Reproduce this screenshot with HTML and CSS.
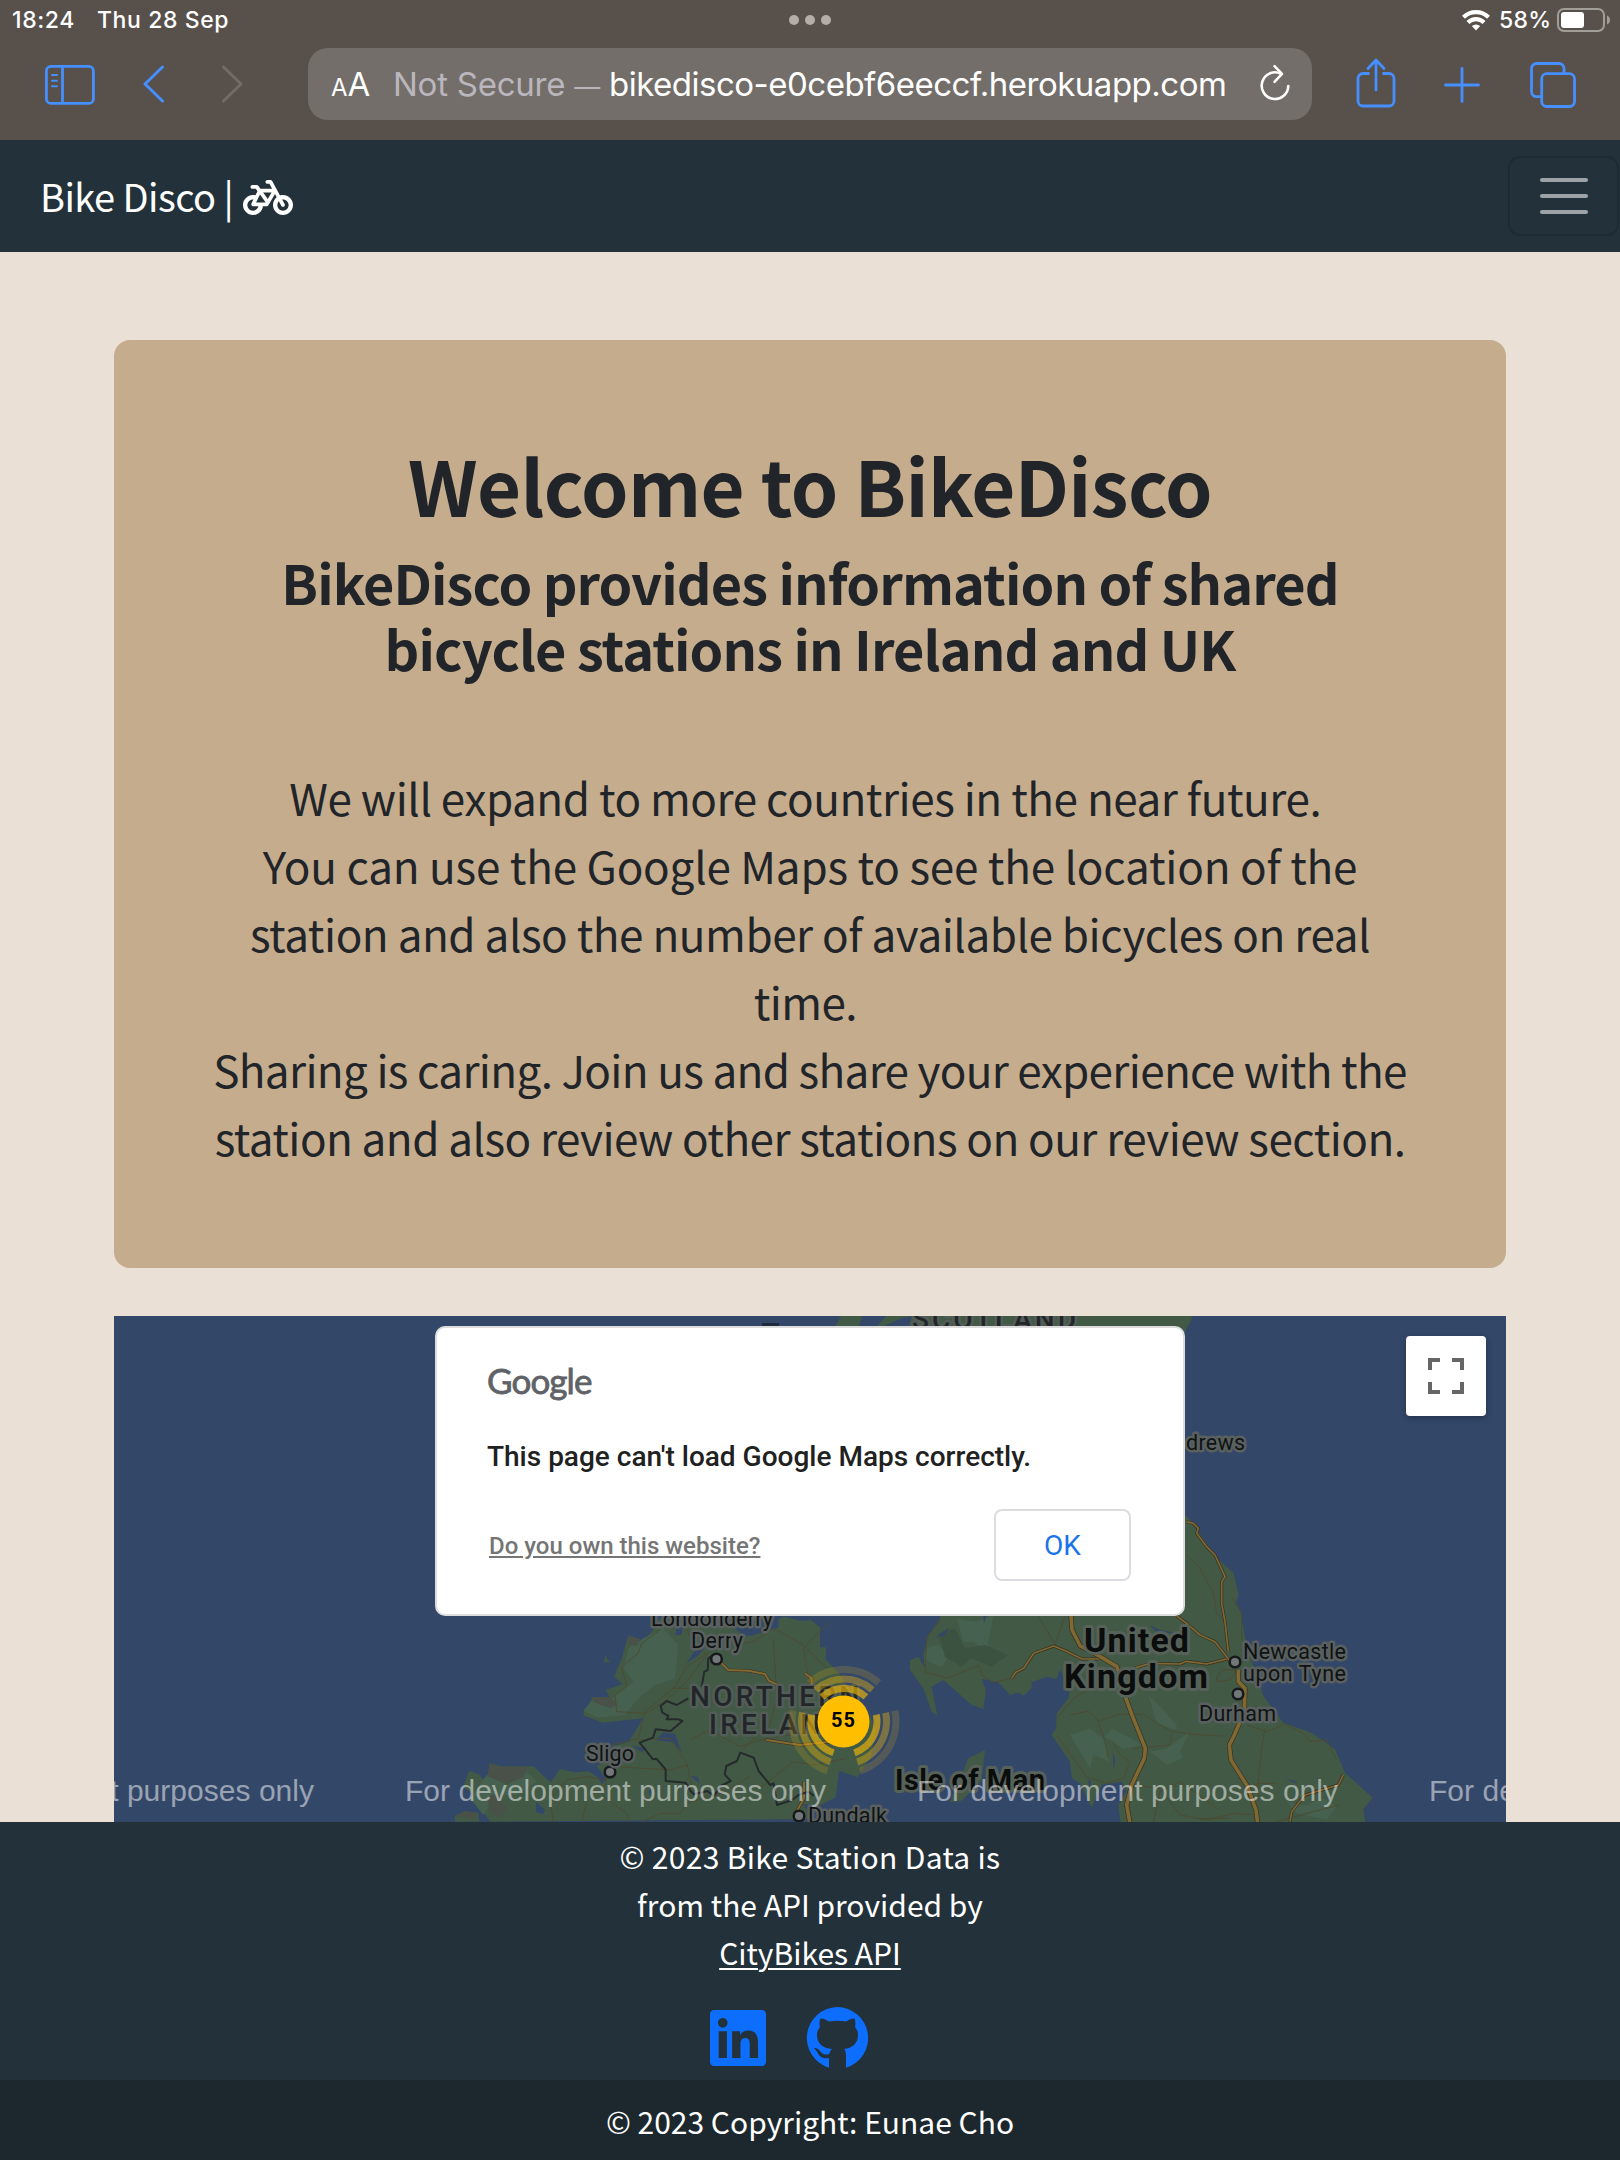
FILE: index.html
```html
<!DOCTYPE html>
<html lang="en">
<head>
<meta charset="utf-8">
<title>Bike Disco</title>
<link rel="stylesheet" href="styles.css">
</head>
<body>
<header class="browser">
  <div class="status">
    <span class="status-time">18:24</span>
    <span class="status-date">Thu 28 Sep</span>
    <span class="dots"><i></i><i></i><i></i></span>
    <svg class="wifi" viewBox="0 0 28 22" width="28" height="22"><g fill="none" stroke="#fff" stroke-width="4.200"><path d="M1.500 8.200a18 18 0 0 1 25 0"/><path d="M6 13.500a11.400 11.400 0 0 1 16 0"/></g><path fill="#fff" d="M14 21.500l-4.200-4.400a6 6 0 0 1 8.400 0z"/></svg>
    <span class="status-pct">58%</span>
    <svg class="battery" viewBox="0 0 54 24" width="54" height="24"><rect x="1" y="1" width="46" height="22" rx="6" fill="none" stroke="#a19d99" stroke-width="2"/><rect x="4" y="4" width="23" height="16" rx="3" fill="#fff"/><path fill="#a19d99" d="M50 7.500q3 1.500 3 4.500t-3 4.500z"/></svg>
  </div>
  <div class="toolbar">
    <svg class="icon-sidebar" viewBox="0 0 50 40" width="50" height="40" fill="none" stroke="#468fff" stroke-width="2.800"><rect x="1.400" y="1.400" width="47" height="37" rx="4.500"/><path d="M17.500 1.400v37"/><path stroke-width="2" stroke-linecap="round" d="M7 10h5M7 15.700h5M7 21.300h5"/></svg>
    <svg class="icon-back" viewBox="0 0 22 38" width="22" height="38" fill="none" stroke="#468fff" stroke-width="3" stroke-linecap="round" stroke-linejoin="round"><path d="M19.500 2L2 19l17.500 17"/></svg>
    <svg class="icon-forward" viewBox="0 0 22 38" width="22" height="38" fill="none" stroke="#716c67" stroke-width="3" stroke-linecap="round" stroke-linejoin="round"><path d="M2.500 2L20 19 2.500 36"/></svg>
    <div class="address">
      <span class="aa"><small>A</small>A</span>
      <span class="insecure">Not Secure <b>—</b></span>
      <span class="domain">bikedisco-e0cebf6eeccf.herokuapp.com</span>
      <svg class="icon-reload" viewBox="0 0 30 38" width="30" height="38" fill="none" stroke="#fff" stroke-width="2.600" stroke-linecap="round" stroke-linejoin="round"><path d="M21 9.800A13.300 13.300 0 1 0 28.300 22"/><path d="M14.500 2.200l7.500 7.600-7.500 8"/></svg>
    </div>
    <svg class="icon-share" viewBox="0 0 40 50" width="40" height="50" fill="none" stroke="#468fff" stroke-width="2.800" stroke-linecap="round" stroke-linejoin="round"><path stroke-linecap="butt" d="M13.500 15.500H7a5 5 0 0 0-5 5V43a5 5 0 0 0 5 5h26a5 5 0 0 0 5-5V20.500a5 5 0 0 0-5-5h-6.500"/><path d="M20 32V3M12 10.500L20 2l8 8.500"/></svg>
    <svg class="icon-plus" viewBox="0 0 36 36" width="36" height="36" stroke="#468fff" stroke-width="2.800" stroke-linecap="round"><path d="M18 1.500v33M1.500 18h33"/></svg>
    <svg class="icon-tabs" viewBox="0 0 46 46" width="46" height="46" fill="none" stroke="#468fff" stroke-width="2.800"><path d="M11.500 34.600H6.500A5 5 0 0 1 1.500 29.600V6.500a5 5 0 0 1 5-5h22.500a5 5 0 0 1 5 5v5"/><rect x="11.700" y="11.700" width="32.800" height="32.800" rx="5"/></svg>
  </div>
</header>

<nav class="navbar">
  <a class="brand">Bike Disco |
    <svg viewBox="0 32 640 448" width="50" height="35" fill="#fff"><path d="M312 32c-13.300 0-24 10.700-24 24s10.700 24 24 24h25.700l34.600 64H222.900l-27.400-38C191 99.700 183.700 96 176 96H120c-13.300 0-24 10.700-24 24s10.700 24 24 24h43.700l22.100 30.700-26.600 53.100c-10-2.500-20.500-3.800-31.200-3.800C57.300 224 0 281.300 0 352s57.300 128 128 128c65.300 0 119.100-48.900 127-112h49c8.500 0 16.300-4.500 20.700-11.800l84.800-143.500 21.700 40.100C402.400 276.300 384 312 384 352c0 70.700 57.300 128 128 128s128-57.300 128-128-57.300-128-128-128c-13.500 0-26.500 2.100-38.700 6L375.400 48.800C369.800 38.400 359 32 347.200 32H312zM458.600 303.700l32.300 59.700c6.300 11.700 20.900 16 32.500 9.700s16-20.900 9.700-32.500l-32.300-59.700c3.600-.6 7.400-.9 11.200-.9 39.800 0 72 32.200 72 72s-32.200 72-72 72-72-32.200-72-72c0-18.600 7-35.500 18.600-48.300zM133.200 368h65c-7.300 32.100-36 56-70.200 56-39.800 0-72-32.200-72-72s32.200-72 72-72c1.700 0 3.400.1 5.100.2l-24.200 48.500c-9 18.100 4.100 39.400 24.300 39.400zm33.700-48l50.700-101.300 72.900 101.200-.1.100H166.900zm90.600-128H365.900L317 274.800 257.400 192z"/></svg>
  </a>
  <button class="toggler"><i></i><i></i><i></i></button>
</nav>

<main>
  <section class="welcome">
    <h1>Welcome to BikeDisco</h1>
    <h2>BikeDisco provides information of shared<br>bicycle stations in Ireland and UK</h2>
    <p>
      <span class="wide">We will expand to more countries in the near future.&nbsp;</span>
      <span class="wider">You can use the Google Maps to see the location of the</span>
      <span class="wide">station and also the number of available bicycles on real</span>
      <span>time.&nbsp;</span>
      <span class="narrow">Sharing is caring. Join us and share your experience with the</span>
      <span>station and also review other stations on our review section.</span>
    </p>
  </section>

  <section class="map">
    <svg class="map-canvas" viewBox="114 1316 1392 506" width="1392" height="506">
      <rect x="114" y="1316" width="1392" height="506" fill="#334769"/>
      <path fill="#415945" d="M833 1330l8-14h352l-8 16z"/>
      <path fill="#334769" d="M862 1316h24l-12 14h-16zM902 1318l10-2-4 12h-28z"/>
      <path fill="#1f2b3a" d="M762 1323h17v5h-17z"/>
      <!-- Ireland -->
      <g transform="translate(430 1605) scale(.33333)">
        <path fill="#415945" d="M75 650V632l28-14 42 6 3 26zM180 650l-32-48 7-12-55-45 18-48 29 11 13 17 25-17-7-33 37 9h95l52 48 28-40 45 10 40-3 25 15 15 22 15-12-30-40 60-35-15-25 50-12 45-72-123 13-59-23 26-46 58 1-15-30 50-18-25-22 25-60 15-57 45 12 30-32 20-36h190l60 45 30-20 40-10 55-22 50 12 30-2 28 22v60l19 0-2 35 50 55 20 50 45 40 20 30 15 40-15 80-40 60-55-20-10 80-50 25-50-5 35 45zM520 172l6-20 14 20z"/>
        <path fill="#46614f" d="M595 130l45-30 60-30 45 50-10 100-60 20-50 40-40 50-80 8-45-20 30-38 50 5 70-55-30-40zM170 510l60 30 60-40 30 30-60 40-60 0-40 60-40-50z"/>
        <path fill="#4a5148" d="M178 478l40 8h72l-8 30-50 20-60-22zM170 575l30-8 30 42-20 30-30-20zM482 276l60 0 20 22-20 12-50-18zM80 632l25-12 35 5-10 18-30-5zM595 90l35 12-10 22-25-10z"/>
        <path fill="#334769" d="M770 175l22-35 35-15-20 25zM680 402l20-20 35 5 20 55-25-30-50-6zM606 422l40 8-10 12zM782 512l22 5 5 20zM318 590l28 26-8 12-20-8zM655 560l8-8-2 22zM735 90l10-40 15 0-5 40zM935 90l20-35 50-22h40v35l-85 25z"/>
        <g fill="none" stroke="#4d4b31" stroke-width="3">
          <path d="M690 75l-55 40-10 30-50 40 15 60-35 25 5 50 90 5 65-45 55-50 60-80-50-55-30-70M770 185l-35 60-90 75-20 80-80 20M770 185l70-45M730 250h60M620 405l100-5 50 75 15 65M780 405l60-30 90 50 60-20 120-20M530 525l-60-10-60 10-50 60 10 65M470 590l-15 60M530 520l-10 55 70 50 10 25M560 485l80 5 80 5 55-15M640 650l50-25h60l20-30 100-30 90-50M850 130l120-20 60-40 90 50 70 70M1030 100l10 180-20 80-80 70M1200 50l-80 80 20 120M990 550l100-80 60 10 100-20"/>
        </g>
        <path fill="none" stroke="#373022" stroke-width="9" d="M870 170l25 25 60 2 50 10 12 20 25 12M1125 205l20 15v20M1010 405l100 15 90-10M1122 530v50l-25 45"/>
        <path fill="none" stroke="#846a30" stroke-width="6" d="M870 170l25 25 60 2 50 10 12 20 25 12M1125 205l20 15v20M1010 405l100 15 90-10M1122 530v50l-25 45"/>
        <path fill="none" stroke="#252a2c" stroke-width="6" stroke-linejoin="round" d="M850 150l-15 10-2 35-10 5-8 45M775 280l-35 20-30-12-18 15 5 20 18 10-5 10 35 0 12 5-35 30-45-5-8 25-40 15 40 50 10-2 28 32v35l60 5 15 25 10 10 40-10 20 15 20-30 30-15-18-20 5-25 32-15 10-25 40 15 15 40 35 42 10-5 10 65 45-15 20-15 30-10 15 12"/>
      </g>
      <!-- Britain -->
      <g transform="translate(900 1605) scale(.33333)">
        <path fill="#415945" d="M122 20l-4 30-33 40-15 60 5 40-20-35-25 10v30l40 55 25 70 17 12-17-87 35-20 85 75 35 12 8-57-13-33 50 10 35 38 25-8 15 10 25-22v-18l45-17 30 7 10-27 30 55-5 30-35 45-2 45-13 20 55 80 5 50 25 15 35 73 30-68 60-10 15 30-25 40 7 60h736l-8-47 28-35-83-75-30-70-70-50-85-30-60-80-52-160-16-90-14-30 8-25-16-65-45-40-90-125-15-10V20zM255 435l-50 25-20 50-35 82 35-5 60-60z"/>
        <path fill="#46614f" d="M80 130l35-12 30 35-20 35-50-25zM170 40l60 10 50-20-20 110-40-30-30 0zM510 390l60-20 40 30 20 70-50-20-10 40zM615 395l20-25 95 50-60 12zM745 270l50 50 35 40 0 15-60-20zM750 440l50-10 70-50-30 60 10 20-50 20zM1160 590l60 10 50-20 40 25-30 40-90-20z"/>
        <path fill="#3b5240" d="M115 85l50-15 30 60 60-10 70 30-50 35-60-25-30 25-50-30z"/>
        <path fill="#334769" d="M108 97l40-30-15 25zM250 33h10l-8 22zM750 60l30 15 50 10-60-2zM638 440l8 25-5 30zM1155 520l40 12-10 2zM500 178l30 5 15 20-30 0zM565 520l8 10-6 30z"/>
        <g fill="none" stroke="#4d4b31" stroke-width="3">
          <path d="M120 40l-40 60-5 100 65 20 95-38 15 32 30 18 55-12M415 33l50 85 30-85M510 330l55-12 30 30 60-20 75 0 80 50 70 10 90 5M470 340l50-60 50-30M595 350l20 60 10 50M470 390l90 125 60 20 50-15 20-50-30-20-20-40M700 430l60-5 50-5 5-35M860-150l40 40 40 75 10 60 30 30M995-25l30 50 0 80M760 650l20-90 60-30 110 80M700 540l80 10 60 80 80 15 80-20 70 5M1095 370l-10 60-10 100 0 60M1030 550l50-15 50 0M1040 360l60 20 50-20M1150 355l60 30 20 25 50-5 30 60M950 215l20-20 40 0-20 30-40 5zM890 640l100 0M1130 650l110-30 80-20"/>
        </g>
        <g fill="none" stroke="#373022" stroke-linejoin="round"><path stroke-width="15" d="M513 30l3 45 25 48 60 32 50 30 25 90 20 55 40 100-3 30-38 80-15 60 10 55M1015 195l0 35 20 20-2 70-30 70-15 30 5 45 50 80 25 70 5 40"/><path stroke-width="9" d="M335 220l12-18 24-12 30-45 60-22 35 14 50 25h50M700 190l50-15 90 2 20-8 60 8 60-15M830 33l30 22 40 35 45 20 50 65M860-250l20 5 15 15-5 15 30 40 25 25 30 65-10 15v65l10 55 10 90M1170 650l5-30 40-50 100-30 15-30"/></g>
        <g fill="none" stroke="#806832" stroke-linejoin="round"><path stroke-width="11" d="M513 30l3 45 25 48 60 32 50 30 25 90 20 55 40 100-3 30-38 80-15 60 10 55M1015 195l0 35 20 20-2 70-30 70-15 30 5 45 50 80 25 70 5 40"/><path stroke-width="5" d="M335 220l12-18 24-12 30-45 60-22 35 14 50 25h50M700 190l50-15 90 2 20-8 60 8 60-15M830 33l30 22 40 35 45 20 50 65M860-250l20 5 15 15-5 15 30 40 25 25 30 65-10 15v65l10 55 10 90M1170 650l5-30 40-50 100-30 15-30"/></g>
      </g>
      <g fill="#72787a" stroke="#17191a" stroke-width="2.500"><circle cx="716.500" cy="1659" r="5.300"/><circle cx="610" cy="1772" r="5.300"/><circle cx="799" cy="1816" r="5.300"/><circle cx="1235" cy="1662" r="5.300"/><circle cx="1238" cy="1694" r="5.300"/></g>
      <g class="place">
        <text x="651" y="1626" textLength="122">Londonderry</text>
        <text x="691" y="1648" textLength="52">Derry</text>
        <text x="586" y="1761" textLength="48">Sligo</text>
        <text x="808" y="1823" textLength="79">Dundalk</text>
        <text x="1186" y="1450" textLength="59">drews</text>
        <text x="1243" y="1659" textLength="103">Newcastle</text>
        <text x="1243" y="1681" textLength="103">upon Tyne</text>
        <text x="1199" y="1721" textLength="77">Durham</text>
      </g>
      <g class="region">
        <text x="690" y="1706" textLength="169">NORTHERN</text>
        <text x="709" y="1734" textLength="133">IRELAND</text>
        <text x="912" y="1329" textLength="164">SCOTLAND</text>
      </g>
      <g class="country">
        <text x="1084" y="1652" textLength="105">United</text>
        <text x="1064" y="1688" textLength="144">Kingdom</text>
        <text class="isle" x="895" y="1790" textLength="150">Isle of Man</text>
      </g>
      <g fill="none" stroke="#ffbf00" stroke-width="7"><circle cx="844" cy="1721.500" r="33" stroke-opacity=".6" stroke-dasharray="48 21.120" transform="rotate(-132 844 1721.500)"/><circle cx="844" cy="1721.500" r="42.500" stroke-opacity=".36" stroke-dasharray="62 27.010" transform="rotate(-132 844 1721.500)"/><circle cx="844" cy="1721.500" r="52" stroke-opacity=".16" stroke-dasharray="76 32.910" transform="rotate(-132 844 1721.500)"/></g>
      <circle cx="843.500" cy="1721.500" r="26" fill="#ffbf00"/>
      <text class="cluster" x="843.500" y="1727" text-anchor="middle">55</text>
      <g class="watermark">
        <text x="-107" y="1801" textLength="421">For development purposes only</text>
        <text x="405" y="1801" textLength="421">For development purposes only</text>
        <text x="917" y="1801" textLength="421">For development purposes only</text>
        <text x="1429" y="1801" textLength="421">For development purposes only</text>
      </g>
    </svg>
    <div class="dialog">
      <div class="google">Google</div>
      <div class="dialog-title">This page can't load Google Maps correctly.</div>
      <div class="dialog-actions"><a>Do you own this website?</a><button>OK</button></div>
    </div>
    <button class="fullscreen"><svg viewBox="0 0 36 36" width="36" height="36" fill="none" stroke="#666" stroke-width="4"><path d="M2 12V2h10M24 2h10v10M34 24v10H24M12 34H2V24"/></svg></button>
  </section>
</main>

<footer>
  <div class="credits">
    <p><span class="source">© 2023 Bike Station Data is</span><br>from the API provided by<br><a>CityBikes API</a></p>
    <div class="social">
      <svg viewBox="0 32 448 448" width="56" height="56" fill="#0d6efd"><path d="M416 32H31.900C14.300 32 0 46.500 0 64.300v383.400C0 465.500 14.300 480 31.900 480H416c17.600 0 32-14.500 32-32.300V64.300c0-17.800-14.400-32.300-32-32.300zM135.400 416H69V202.200h66.500V416zm-33.200-243c-21.300 0-38.500-17.300-38.500-38.500S80.900 96 102.200 96c21.200 0 38.500 17.300 38.500 38.500 0 21.300-17.200 38.500-38.500 38.500zm282.100 243h-66.400V312c0-24.800-.5-56.700-34.500-56.700-34.600 0-39.900 27-39.900 54.900V416h-66.400V202.200h63.700v29.200h.9c8.900-16.800 30.600-34.500 62.900-34.500 67.200 0 79.700 44.300 79.700 101.900V416z"/></svg>
      <svg viewBox="0 0 62 61" width="62" height="61"><path fill="#0d6efd" d="M31 0a31 31 0 0 0-8 60.700V51c-8 1.300-10-2.500-11.500-5.500-1-2-2-3-3.500-4 1.500-1 4 0 5.500 2 3 4 5 4.800 9.800 3.500.4-2.200 1.500-4 2.700-5-9-1-15-5-15-14 0-3.500 1.200-5.500 3-8-.8-2-.5-6 .5-8.500 3-.2 6 1.500 8.500 3q8-1.600 17 0c2.500-1.500 5.500-3.200 8.500-3 1 2.500 1.300 6.500.5 8.500 2 2.500 3 4.500 3 8 0 9-6 13-14 14 1.500 1.500 2 4 2 7v11.700A31 31 0 0 0 31 0z"/></svg>
    </div>
  </div>
  <div class="copyright">© 2023 Copyright: Eunae Cho</div>
</footer>
</body>
</html>
```

FILE: styles.css
```css
* { box-sizing: border-box; }
body {
  margin: 0;
  width: 1620px;
  height: 2160px;
  overflow: hidden;
  background: #ebe0d6;
  color: #212529;
  font-family: "Noto Sans CJK JP", "Noto Sans", sans-serif;
  white-space: nowrap;
}
svg { display: block; flex: none; }
button { font: inherit; padding: 0; margin: 0; }
i { display: block; }

/* Browser chrome */
.browser { height: 140px; background: #57504b; color: #fff; font-family: Inter, sans-serif; }
.status { height: 40px; display: flex; align-items: center; padding: 0 9px 0 12px; font-size: 23px; font-weight: 500; letter-spacing: .6px; position: relative; }
.status-date { margin-left: 22px; }
.dots { position: absolute; left: 789px; top: 15px; display: flex; gap: 6px; }
.dots i { width: 10px; height: 10px; border-radius: 50%; background: #b3aeaa; }
.wifi { margin-left: auto; }
.status-pct { width: 52px; margin: 0 6px 0 9px; letter-spacing: .3px; }
.toolbar { height: 100px; display: flex; align-items: flex-start; padding: 8px 44px 0 45px; }
.icon-sidebar { margin-top: 17px; }
.icon-back { margin: 17px 0 0 48px; }
.icon-forward { margin: 17px 0 0 56px; }
.address { width: 1004px; height: 72px; margin-left: 65px; border-radius: 20px; background: #736e69; display: flex; align-items: center; padding: 0 22px 0 23px; font-size: 33px; }
.aa { width: 62px; line-height: 1; flex: none; }
.aa small { font-size: 24px; }
.insecure { width: 216px; flex: none; color: #bab6bd; letter-spacing: -.25px; }
.insecure b { font-size: 26px; font-weight: 400; }
.domain { letter-spacing: -.5px; }
.icon-reload { margin-left: auto; margin-top: -3px; }
.icon-share { margin: 10px 0 0 44px; }
.icon-plus { margin: 19px 0 0 48px; }
.icon-tabs { margin: 14px 0 0 50px; }

/* Site navigation */
.navbar { height: 112px; background: #23323a; display: flex; align-items: center; justify-content: space-between; padding: 0 1px 0 40px; }
.brand { display: flex; align-items: center; gap: 10px; color: #fff; font-size: 38px; line-height: 56px; letter-spacing: -.55px; }
.brand svg { margin-top: 2px; }
.toggler { width: 111px; height: 80px; border: 2px solid #1d2b32; border-radius: 12px; background: none; display: flex; flex-direction: column; align-items: center; justify-content: center; gap: 12px; }
.toggler i { width: 48px; height: 4px; border-radius: 2px; background: #9ca2a6; }

/* Page content */
main { padding: 88px 114px 0; height: 1570px; }
.welcome { height: 928px; padding-top: 99px; border-radius: 16px; background: #c5ac8d; text-align: center; }
h1, h2, p { margin: 0; }
h1 { font-size: 76px; line-height: 91px; letter-spacing: -.6px; }
h2 { margin-top: 19px; font-size: 54px; line-height: 66px; letter-spacing: -.88px; }
.welcome p { margin-top: 82px; font-size: 44px; line-height: 68px; letter-spacing: -.54px; }
.welcome p span { display: block; }
.welcome .wide { letter-spacing: -.45px; }
.welcome .wider { letter-spacing: -.2px; }
.welcome .narrow { letter-spacing: -.65px; }

/* Map */
.map { position: relative; margin-top: 48px; height: 506px; }
.place { font: 21.5px Roboto, sans-serif; fill: #101314; stroke: #59605f; stroke-width: 5px; stroke-linejoin: round; paint-order: stroke; }
.region { font: 500 28px Roboto, sans-serif; fill: #222629; stroke: #535d58; stroke-width: 5px; stroke-linejoin: round; paint-order: stroke; }
.country { font: 700 34px Roboto, sans-serif; fill: #0b0d0d; stroke: #566159; stroke-width: 6px; stroke-linejoin: round; paint-order: stroke; }
.isle { font-size: 29px; }
.cluster { font: 700 20px Roboto, sans-serif; letter-spacing: 1px; }
.watermark { font: 30px "Liberation Sans", sans-serif; fill: rgba(255, 255, 255, .5); }
.dialog { position: absolute; left: 321px; top: 10px; width: 750px; height: 290px; padding: 29px 52px 0 50px; border: 2px solid #ddd; border-radius: 10px; background: #fff; font-family: Roboto, sans-serif; }
.google { height: 53px; font: 35px/46px Lato, sans-serif; color: #5f6368; -webkit-text-stroke: .8px #5f6368; letter-spacing: -.9px; }
.dialog-title { height: 99px; line-height: 94px; font-size: 28px; font-weight: 500; color: #212121; }
.dialog-actions { display: flex; justify-content: space-between; align-items: center; }
.dialog-actions a { margin: 2px 0 0 2px; font-size: 24px; font-weight: 500; color: #757575; text-decoration: underline; }
.dialog-actions button { width: 137px; height: 72px; border: 2px solid #dadce0; border-radius: 8px; background: #fff; color: #1a73e8; font-size: 28px; }
.fullscreen { position: absolute; right: 20px; top: 20px; width: 80px; height: 80px; border: 0; border-radius: 4px; background: #fff; box-shadow: 0 2px 6px rgba(0, 0, 0, .3); display: flex; align-items: center; justify-content: center; }

/* Footer */
footer { color: #fff; font-size: 30px; line-height: 48px; text-align: center; }
.credits { height: 258px; background: #23323a; padding-top: 10px; }
.credits a { text-decoration: underline; text-decoration-thickness: 2px; text-underline-offset: 3px; }
.source { letter-spacing: .3px; }
.social { display: flex; justify-content: center; align-items: center; gap: 40px; margin-right: 42px; padding-top: 31px; }
.copyright { height: 80px; background: #1d282e; line-height: 82px; }
```
